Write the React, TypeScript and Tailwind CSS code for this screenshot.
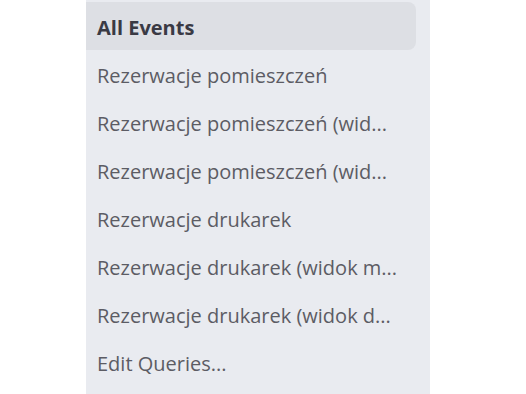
import React from 'react'

const items = [
  'Rezerwacje pomieszczeń',
  'Rezerwacje pomieszczeń (wid...',
  'Rezerwacje pomieszczeń (wid...',
  'Rezerwacje drukarek',
  'Rezerwacje drukarek (widok m...',
  'Rezerwacje drukarek (widok d...',
  'Edit Queries...',
]

export default function App() {
  return (
    <div className="w-[526px] h-[394px] bg-white flex justify-start pl-[86px] overflow-hidden">
      <div
        className="w-[344px] h-[394px] bg-[#e9ebf0] pt-[2px] pr-[14px] flex flex-col"
        style={{ fontFamily: '"Open Sans", "Noto Sans", sans-serif' }}
      >
        <div className="h-[48px] shrink-0 rounded-r-lg bg-[#dddfe4] flex items-center pl-[11px] pt-[3px] text-[20px] font-bold text-[#3a3a44]">
          All Events
        </div>
        {items.map((label, i) => (
          <div
            key={i}
            className="h-[48px] shrink-0 flex items-center pl-[11px] pt-[3px] text-[20px] text-[#5c5c64]"
          >
            {label}
          </div>
        ))}
      </div>
    </div>
  )
}
